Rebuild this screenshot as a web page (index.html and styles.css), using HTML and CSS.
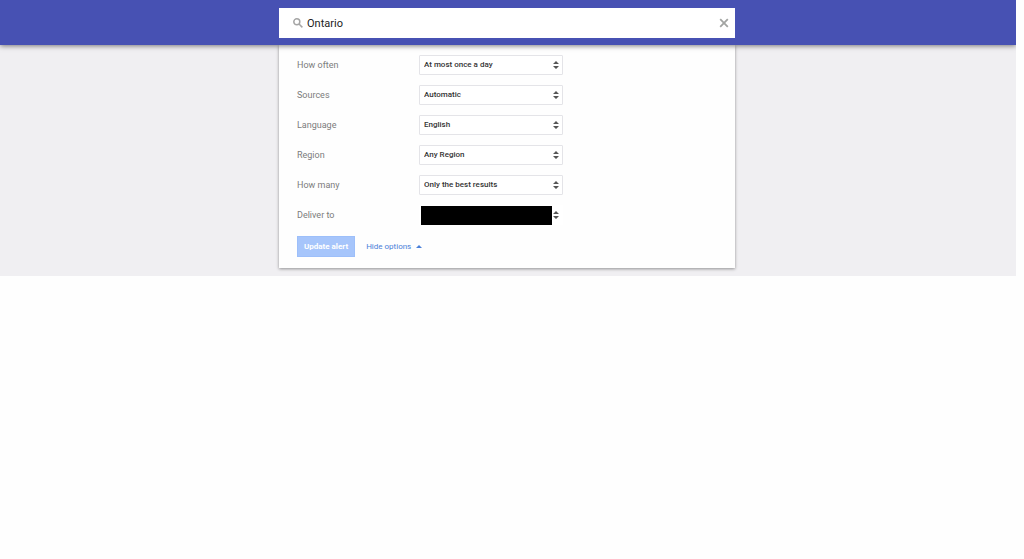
FILE: index.html
```html
<!DOCTYPE html>
<html lang="en">
<head>
<meta charset="UTF-8" />
<meta name="viewport" content="width=device-width, initial-scale=1" />
<title>Alerts</title>
<link rel="stylesheet" href="styles.css">
</head>
<body>

<form class="page">
<header class="topbar">
<div class="search">
<svg class="search-icon" viewBox="0 0 10 10"><circle cx="3.8" cy="3.8" r="3" /><path d="M6 6l3.4 3.4" /></svg>
<input type="text" class="search-input" aria-label="Create an alert about" value="Ontario" />
<button type="button" class="clear" aria-label="Clear">
<svg viewBox="0 0 10 10"><path d="M1.2 1.2l7.6 7.6M8.8 1.2l-7.6 7.6" /></svg>
</button>
</div>
</header>

<main class="content">
<div class="panel">
<div class="row">
<label for="often">How often</label>
<div class="select">
<select id="often"><option>At most once a day</option></select>
<svg class="arrows" viewBox="0 0 6 8"><path d="M0 3l3-3 3 3zM0 5h6l-3 3z" /></svg>
</div>
</div>
<div class="row">
<label for="sources">Sources</label>
<div class="select">
<select id="sources"><option>Automatic</option></select>
<svg class="arrows" viewBox="0 0 6 8"><path d="M0 3l3-3 3 3zM0 5h6l-3 3z" /></svg>
</div>
</div>
<div class="row">
<label for="language">Language</label>
<div class="select">
<select id="language"><option>English</option></select>
<svg class="arrows" viewBox="0 0 6 8"><path d="M0 3l3-3 3 3zM0 5h6l-3 3z" /></svg>
</div>
</div>
<div class="row">
<label for="region">Region</label>
<div class="select">
<select id="region"><option>Any Region</option></select>
<svg class="arrows" viewBox="0 0 6 8"><path d="M0 3l3-3 3 3zM0 5h6l-3 3z" /></svg>
</div>
</div>
<div class="row">
<label for="many">How many</label>
<div class="select">
<select id="many"><option>Only the best results</option></select>
<svg class="arrows" viewBox="0 0 6 8"><path d="M0 3l3-3 3 3zM0 5h6l-3 3z" /></svg>
</div>
</div>
<div class="row">
<label for="deliver">Deliver to</label>
<div class="select select-plain">
<select id="deliver"><option></option></select>
<span class="redacted"></span>
<svg class="arrows" viewBox="0 0 6 8"><path d="M0 3l3-3 3 3zM0 5h6l-3 3z" /></svg>
</div>
</div>
<div class="actions">
<button type="button" class="update">Update alert</button>
<a href="#" class="toggle">Hide options <svg viewBox="0 0 6 3"><path d="M0 3l3-3 3 3z" /></svg></a>
</div>
</div>
</main>
</form>

</body>
</html>
```
FILE: styles.css
```css
body {
margin: 0;
background: #fefefe;
font-family: Roboto, Arial, sans-serif;
}
.page {
margin-right: 8px;
}
.topbar {
position: relative;
z-index: 1;
padding: 8px 2px 7px 0;
background: #4751b3;
box-shadow: 0 1px 5px rgba(0,0,0,0.5);
clip-path: inset(0 0 -10px 0);
}
.search {
display: flex;
align-items: center;
box-sizing: border-box;
max-width: 456px;
height: 30px;
margin: 0 auto;
padding: 0 6px 0 14px;
background: #fff;
}
.search-icon {
width: 10px;
height: 10px;
fill: none;
stroke: #a5a5a5;
stroke-width: 1.5;
}
.search-input {
flex: 1;
min-width: 0;
padding: 0 4px;
border: none;
outline: none;
background: none;
color: #222;
font: 11px Roboto, Arial, sans-serif;
}
.clear {
display: flex;
padding: 0;
border: none;
background: none;
cursor: pointer;
}
.clear svg {
width: 10px;
height: 10px;
stroke: #a2a4a2;
stroke-width: 1.8;
}
.content {
padding: 0 2px 8px 0;
background: #f0eff2;
}
.panel {
box-sizing: border-box;
max-width: 456px;
margin: 0 auto;
padding: 10px 18px 11px;
background: #fefefe;
box-shadow: 0 1px 3px rgba(0,0,0,0.4);
}
.row {
display: flex;
align-items: center;
height: 20px;
margin-bottom: 10px;
}
.row label {
width: 122px;
color: #7c7c7c;
font-size: 9px;
}
.select {
position: relative;
width: 144px;
}
.select select {
display: block;
appearance: none;
box-sizing: border-box;
width: 100%;
height: 20px;
padding: 0 16px 1px 4px;
border: 1px solid #e4e4e8;
border-radius: 1px;
background: #fff;
color: #333;
font: 500 8px Roboto, Arial, sans-serif;
}
.select-plain select {
border-color: transparent;
}
.arrows {
position: absolute;
top: 6px;
right: 4px;
width: 6px;
height: 8px;
fill: #555;
pointer-events: none;
}
.redacted {
position: absolute;
inset: 1px 11px 0 2px;
background: #000;
}
.actions {
display: flex;
align-items: center;
gap: 11px;
padding-top: 1px;
}
.update {
height: 21px;
padding: 0 6px;
border: 1px solid #9dbffa;
background: #a6c5fb;
color: #fff;
font: bold 8px Roboto, Arial, sans-serif;
cursor: pointer;
}
.toggle {
color: #4a80d9;
font-size: 8px;
text-decoration: none;
}
.toggle svg {
width: 6px;
height: 3px;
margin: 0 0 1px 3px;
fill: #4a80d9;
}
```
